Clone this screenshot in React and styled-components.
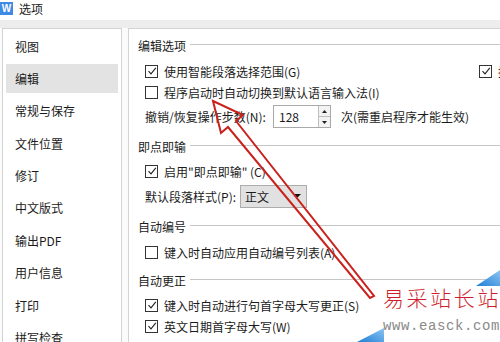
import React from "react";
import styled, { createGlobalStyle } from "styled-components";

const GlobalStyle = createGlobalStyle`
  *, *::before, *::after {
    box-sizing: border-box;
  }
  html, body {
    margin: 0;
    padding: 0;
    background: #ffffff;
  }
  body {
    font-family: "Noto Sans CJK SC", "Noto Sans", sans-serif;
    font-size: 12px;
    color: #1b1b1b;
  }
`;

const Window = styled.div`
  position: relative;
  width: 500px;
  height: 342px;
  overflow: hidden;
  background: #ffffff;
  display: flex;
  flex-direction: column;
`;

const TitleBar = styled.div`
  flex-shrink: 0;
  height: 20px;
  display: flex;
  align-items: center;
  gap: 6px;
  padding-bottom: 3px;
  background: #ffffff;
`;

const AppIcon = styled.span`
  width: 13px;
  height: 13px;
  background: #3f8ae6;
  color: #ffffff;
  font-family: "Liberation Sans", sans-serif;
  font-size: 10px;
  font-weight: bold;
  line-height: 13px;
  text-align: center;
`;

const Title = styled.span`
  font-size: 12px;
  line-height: 16px;
`;

const Band = styled.div`
  flex-shrink: 0;
  height: 8px;
  background: #ededed;
`;

const Content = styled.div`
  flex: 1;
  min-height: 0;
  display: flex;
  gap: 6px;
  padding-left: 2px;
  background: #fbfbfb;
`;

const Nav = styled.div`
  width: 120px;
  flex-shrink: 0;
  padding: 2.5px 3px 0;
  border: 1px solid #d3d3d3;
  border-bottom: none;
  background: #ffffff;
`;

const NavItem = styled.div`
  height: 29px;
  margin-bottom: 3.4px;
  padding-left: 9px;
  display: flex;
  align-items: center;
  font-size: 12px;
  background: ${(p) => (p.$active ? "#e3e3e3" : "transparent")};
`;

const Panel = styled.div`
  width: 430px;
  flex-shrink: 0;
  padding: 6px 0 0 9px;
  border-top: 1px solid #d3d3d3;
  border-left: 1px solid #d3d3d3;
  background: #ffffff;
`;

const Section = styled.div`
  margin-top: ${(p) => p.$gap || 0}px;
`;

const Heading = styled.div`
  height: 20px;
  display: flex;
  align-items: center;
  gap: 4px;
`;

const Rule = styled.span`
  flex: 1;
  height: 1px;
  margin-top: -2px;
  background: #c6c6c6;
`;

const Body = styled.div`
  padding: ${(p) => p.$pt || 0}px 0 0 7px;
`;

const Row = styled.div`
  height: ${(p) => p.$h || 21}px;
  margin-top: ${(p) => p.$mt || 0}px;
  display: flex;
  align-items: center;
  white-space: nowrap;
`;

const TwoCol = styled.div`
  display: grid;
  grid-template-columns: 334px auto;
`;

const Box = styled.span`
  width: 13px;
  height: 13px;
  flex-shrink: 0;
  border: 1px solid #333333;
  background: #ffffff;
  margin-right: 6px;
  display: flex;
  align-items: center;
  justify-content: center;
`;

const FieldLabel = styled.span`
  width: ${(p) => p.$w}px;
  flex-shrink: 0;
`;

const Spin = styled.div`
  width: 58px;
  height: 23px;
  border: 1px solid #a9a9a9;
  display: flex;
  background: #ffffff;
  margin-right: 10px;
`;

const SpinValue = styled.span`
  flex: 1;
  padding-left: 5px;
  display: flex;
  align-items: center;
  font-size: 12px;
`;

const SpinButtons = styled.div`
  width: 12px;
  display: flex;
  flex-direction: column;
  border-left: 1px solid #bdbdbd;
`;

const SpinButton = styled.span`
  flex: 1;
  display: flex;
  align-items: center;
  justify-content: center;
  background: #f3f3f3;
  border-top: ${(p) => (p.$down ? "1px solid #bdbdbd" : "none")};
`;

const Select = styled.div`
  width: 67px;
  height: 23px;
  border: 1px solid #adadad;
  background: #e1e1e1;
  display: flex;
  align-items: center;
  justify-content: space-between;
  padding: 0 5px 0 4px;
`;

const Overlay = styled.svg`
  position: absolute;
  left: 0;
  top: 0;
  width: 500px;
  height: 342px;
  pointer-events: none;
`;

const Watermark = styled.div`
  position: absolute;
  left: 381px;
  top: 283px;
  width: 125px;
  height: 59px;
  background: #ffffff;
  display: flex;
  flex-direction: column;
  padding-left: 2px;
`;

const Brand = styled.span`
  color: #cf1f2e;
  font-size: 21px;
  letter-spacing: 2.6px;
  line-height: 28px;
  font-weight: 300;
`;

const Site = styled.span`
  color: #8a8a8a;
  font-family: "Liberation Mono", monospace;
  font-size: 14px;
  letter-spacing: 0.6px;
  line-height: 20px;
  margin-top: 5px;
`;

const Check = () => (
  <svg width="10" height="10" viewBox="0 0 10 10">
    <path d="M1.5 5.2 L4 7.8 L8.8 1.8" fill="none" stroke="#222" strokeWidth="1.1" />
  </svg>
);

const CheckItem = ({ checked, children }) => (
  <Row>
    <Box>{checked ? <Check /> : null}</Box>
    {children}
  </Row>
);

const Tri = ({ up }) => (
  <svg width="5" height="3" viewBox="0 0 5 3">
    <path d={up ? "M0 3 L2.5 0 L5 3 Z" : "M0 0 L2.5 3 L5 0 Z"} fill="#222" />
  </svg>
);

const navItems = [
  "视图",
  "编辑",
  "常规与保存",
  "文件位置",
  "修订",
  "中文版式",
  "输出PDF",
  "用户信息",
  "打印",
  "拼写检查",
];

export default function App() {
  return (
    <>
      <GlobalStyle />
      <Window>
        <TitleBar>
          <AppIcon>W</AppIcon>
          <Title>选项</Title>
        </TitleBar>
        <Band />
        <Content>
          <Nav>
            {navItems.map((item) => (
              <NavItem key={item} $active={item === "编辑"}>
                {item}
              </NavItem>
            ))}
          </Nav>
          <Panel>
            <Section>
              <Heading>
                编辑选项
                <Rule />
              </Heading>
              <Body $pt={5.5}>
                <TwoCol>
                  <CheckItem checked>使用智能段落选择范围(G)</CheckItem>
                  <CheckItem checked>拖放式文字编辑(D)</CheckItem>
                </TwoCol>
                <CheckItem>程序启动时自动切换到默认语言输入法(I)</CheckItem>
                <Row $h={28}>
                  <FieldLabel $w={128}>撤销/恢复操作步数(N):</FieldLabel>
                  <Spin>
                    <SpinValue>128</SpinValue>
                    <SpinButtons>
                      <SpinButton>
                        <Tri up />
                      </SpinButton>
                      <SpinButton $down>
                        <Tri />
                      </SpinButton>
                    </SpinButtons>
                  </Spin>
                  次(需重启程序才能生效)
                </Row>
              </Body>
            </Section>

            <Section $gap={5.5}>
              <Heading>
                即点即输
                <Rule />
              </Heading>
              <Body $pt={4.5}>
                <CheckItem checked>启用"即点即输" (C)</CheckItem>
                <Row $h={26} $mt={1.5}>
                  <FieldLabel $w={95}>默认段落样式(P):</FieldLabel>
                  <Select>
                    正文
                    <svg width="8" height="4" viewBox="0 0 8 4">
                      <path d="M0 0 L4 4 L8 0 Z" fill="#111" />
                    </svg>
                  </Select>
                </Row>
              </Body>
            </Section>

            <Section $gap={7}>
              <Heading>
                自动编号
                <Rule />
              </Heading>
              <Body $pt={5.5}>
                <CheckItem>键入时自动应用自动编号列表(A)</CheckItem>
              </Body>
            </Section>

            <Section $gap={7.5}>
              <Heading>
                自动更正
                <Rule />
              </Heading>
              <Body $pt={4.5}>
                <CheckItem checked>键入时自动进行句首字母大写更正(S)</CheckItem>
                <CheckItem checked>英文日期首字母大写(W)</CheckItem>
              </Body>
            </Section>
          </Panel>
        </Content>

        <Overlay viewBox="0 0 500 342">
          <polygon
            points="213,101 243,115 236,121 374,296 370,298 228,127 221,133"
            fill="none"
            stroke="#c9221c"
            strokeWidth="2"
            strokeLinejoin="miter"
          />
        </Overlay>

        <Watermark>
          <Brand>易采站长站</Brand>
          <Site>www.easck.com</Site>
        </Watermark>

        <Overlay viewBox="0 0 500 342">
          <defs>
            <linearGradient id="wmBlue" x1="0" y1="1" x2="1" y2="0">
              <stop offset="0" stopColor="#1f7fd6" />
              <stop offset="1" stopColor="#8cc6f2" />
            </linearGradient>
          </defs>
          <polygon points="476,286 500,270 500,286" fill="url(#wmBlue)" />
          <polygon points="357,342 384,328 384,342" fill="url(#wmBlue)" />
        </Overlay>
      </Window>
    </>
  );
}
